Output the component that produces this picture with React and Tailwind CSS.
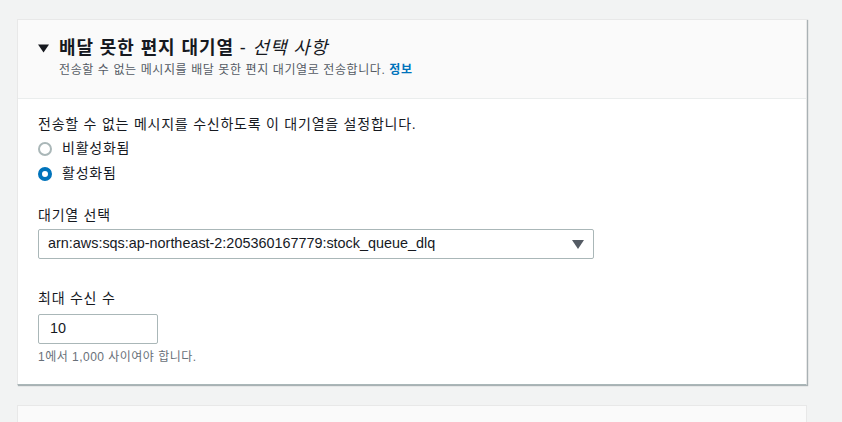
import React, { useState } from 'react';

const font = { fontFamily: '"Liberation Sans", "Noto Sans CJK KR", sans-serif' };

const Radio = ({ checked, label, onClick }) => (
  <label className="flex items-center h-[25px] cursor-pointer" onClick={onClick}>
    {checked ? (
      <span className="w-[14px] h-[14px] rounded-full border-[4px] border-[#0073bb] bg-white" />
    ) : (
      <span className="w-[14px] h-[14px] rounded-full border-2 border-[#aab7b8] bg-white" />
    )}
    <span className="ml-[10px] text-[14px] tracking-[0.055em] text-[#16191f]">{label}</span>
  </label>
);

const App = () => {
  const [enabled, setEnabled] = useState(true);

  return (
    <div className="w-[842px] h-[422px] overflow-hidden bg-[#f2f3f3] pt-[19px] pl-[17px]" style={font}>
      {/* dead-letter queue card */}
      <div className="w-[790px] bg-white border border-[#e8e8e8] border-b-[#aab7b8] shadow-[1px_1px_1px_0_rgba(0,28,36,0.3)]">
        <div className="h-[79px] bg-[#fafafa] border-b border-[#eaeded] pl-[20px] pt-[16px]">
          <div className="flex items-center">
            <svg width="11" height="9" viewBox="0 0 11 9" className="mr-[10px]">
              <path d="M0 0.5h11L5.5 8.5z" fill="#16191f" />
            </svg>
            <h2 className="text-[18px] font-bold tracking-[0.05em] text-[#16191f] leading-[24px]">
              배달 못한 편지 대기열
              <span className="font-normal"> - </span>
              <i className="font-normal">선택 사항</i>
            </h2>
          </div>
          <p className="ml-[21px] text-[12px] tracking-[0.05em] text-[#545b64] leading-[18px] mt-[1px]">
            전송할 수 없는 메시지를 배달 못한 편지 대기열로 전송합니다.{' '}
            <a href="#" className="text-[#0073bb] font-bold">정보</a>
          </p>
        </div>

        <div className="pl-[20px] pt-[14px] pb-[18px]">
          <p className="text-[14px] tracking-[0.055em] text-[#16191f] leading-[22px]">
            전송할 수 없는 메시지를 수신하도록 이 대기열을 설정합니다.
          </p>
          <div className="flex flex-col mt-[1px]">
            <Radio checked={!enabled} label="비활성화됨" onClick={() => setEnabled(false)} />
            <Radio checked={enabled} label="활성화됨" onClick={() => setEnabled(true)} />
          </div>

          <p className="mt-[18px] text-[14px] tracking-[0.055em] text-[#16191f] leading-[22px]">대기열 선택</p>
          <div className="mt-[3px] w-[556px] h-[30px] border border-[#aab7b8] rounded-[2px] flex items-center justify-between pl-[9px] pr-[8px]">
            <span className="text-[14.4px] text-[#16191f]">arn:aws:sqs:ap-northeast-2:205360167779:stock_queue_dlq</span>
            <svg width="12" height="10" viewBox="0 0 12 10" className="mr-[1px]">
              <path d="M0 1h12L6 10z" fill="#545b64" />
            </svg>
          </div>

          <p className="mt-[28px] text-[14px] tracking-[0.055em] text-[#16191f] leading-[22px]">최대 수신 수</p>
          <div className="mt-[5px] w-[120px] h-[30px] border border-[#aab7b8] rounded-[2px] flex items-center pl-[11px]">
            <span className="text-[14.4px] text-[#16191f]">10</span>
          </div>
          <p className="mt-[4px] text-[12px] tracking-[0.04em] text-[#687078] leading-[18px]">1에서 1,000 사이여야 합니다.</p>
        </div>
      </div>

      {/* next card, cut off */}
      <div className="mt-[20px] w-[790px] h-[40px] bg-[#fafafa] border border-[#e8e8e8]" />
    </div>
  );
};

export default App;
